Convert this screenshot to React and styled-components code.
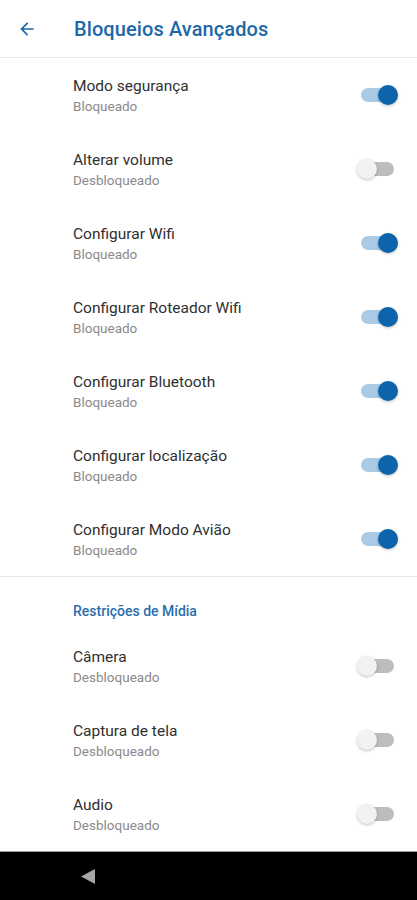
import React from 'react'
import styled, { createGlobalStyle } from 'styled-components'

const GlobalStyle = createGlobalStyle`
  html, body { margin: 0; padding: 0; background: #fff; }
  body { font-family: Roboto, "Noto Sans", sans-serif; }
`

const advanced = [
    { title: 'Modo segurança', on: true },
    { title: 'Alterar volume', on: false },
    { title: 'Configurar Wifi', on: true },
    { title: 'Configurar Roteador Wifi', on: true },
    { title: 'Configurar Bluetooth', on: true },
    { title: 'Configurar localização', on: true },
    { title: 'Configurar Modo Avião', on: true },
]

const media = [
    { title: 'Câmera', on: false },
    { title: 'Captura de tela', on: false },
    { title: 'Audio', on: false },
]

const Screen = styled.div`
    width: 417px;
    height: 900px;
    display: flex;
    flex-direction: column;
    background: #fff;
    overflow: hidden;
`

const Header = styled.header`
    height: 57px;
    display: flex;
    align-items: center;
    gap: 37px;
    padding-left: 17px;
    border-bottom: 1px solid #e6e6e6;
    box-sizing: content-box;
`

const Title = styled.h1`
    margin: 0;
    font-size: 20px;
    font-weight: 500;
    color: #1d68a8;
    letter-spacing: 0.1px;
`

const List = styled.div`
    display: flex;
    flex-direction: column;
    flex: 1;
`

const Section = styled.div`
    display: flex;
    flex-direction: column;
    border-bottom: ${p => (p.divided ? '1px solid #e6e6e6' : 'none')};
`

const SectionLabel = styled.div`
    height: 52px;
    box-sizing: border-box;
    padding: 26px 0 0 73px;
    font-size: 14px;
    font-weight: 500;
    color: #2a6dab;
`

const Row = styled.div`
    height: 74px;
    display: flex;
    align-items: center;
    justify-content: space-between;
    padding: 0 19px 0 73px;
`

const Texts = styled.div`
    display: flex;
    flex-direction: column;
    gap: 3px;
`

const RowTitle = styled.span`
    font-size: 15.5px;
    color: #303030;
`

const RowSub = styled.span`
    font-size: 13.5px;
    color: #8a8a8a;
`

const Switch = styled.div`
    position: relative;
    width: 41px;
    height: 20px;
`

const Track = styled.div`
    position: absolute;
    left: 4px;
    right: 4px;
    top: 3px;
    height: 14px;
    border-radius: 7px;
    background: ${p => (p.on ? '#a9cbe6' : '#bdbdbd')};
`

const Thumb = styled.div`
    position: absolute;
    top: 0;
    left: ${p => (p.on ? '21px' : '0')};
    width: 20px;
    height: 20px;
    border-radius: 50%;
    background: ${p => (p.on ? '#0d64ab' : '#f2f2f2')};
    box-shadow: 0 1px 3px rgba(0, 0, 0, 0.25);
`

const NavBar = styled.nav`
    height: 48px;
    background: #000;
    border-top: 1px solid #9a9a9a;
    display: flex;
    align-items: center;
    padding-left: 80px;
`

const BackArrow = () => (
    <svg width="20" height="20" viewBox="0 0 24 24">
        <path d="M20 11H7.83l5.59-5.59L12 4l-8 8 8 8 1.41-1.41L7.83 13H20v-2z" fill="#1d68a8" />
    </svg>
)

const SettingRow = ({ title, on }) => (
    <Row>
        <Texts>
            <RowTitle>{title}</RowTitle>
            <RowSub>{on ? 'Bloqueado' : 'Desbloqueado'}</RowSub>
        </Texts>
        <Switch>
            <Track on={on ? 1 : 0} />
            <Thumb on={on ? 1 : 0} />
        </Switch>
    </Row>
)

const App = () => {
    return (
        <Screen>
            <GlobalStyle />
            <Header>
                <BackArrow />
                <Title>Bloqueios Avançados</Title>
            </Header>
            <List>
                <Section divided>
                    {advanced.map(item => <SettingRow key={item.title} {...item} />)}
                </Section>
                <Section>
                    <SectionLabel>Restrições de Mídia</SectionLabel>
                    {media.map(item => <SettingRow key={item.title} {...item} />)}
                </Section>
            </List>
            <NavBar>
                <svg width="16" height="17" viewBox="0 0 16 17">
                    <path d="M15 1 L15 16 L1 8.5 Z" fill="#a6a6a6" />
                </svg>
            </NavBar>
        </Screen>
    )
}

export default App
